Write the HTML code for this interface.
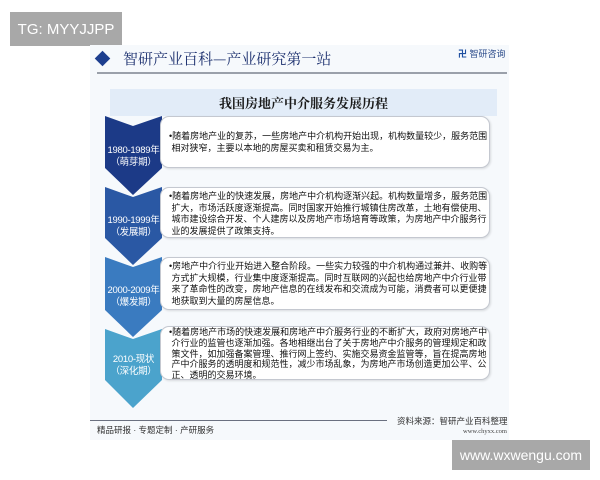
<!DOCTYPE html>
<html><head><meta charset="utf-8"><style>
*{margin:0;padding:0;box-sizing:border-box}
body{width:600px;height:480px;background:#fff;position:relative;overflow:hidden;font-family:"Liberation Sans","Noto Sans CJK SC",sans-serif}
.abs{position:absolute}
#panel{left:90px;top:45px;width:419px;height:395px;background:#f6f9fc}
.tag{background:#a8a8a8;color:#fff;font-size:15px;display:flex;align-items:center;justify-content:center}
.box{position:absolute;left:160px;width:330px;border:1px solid #c4c8d0;border-radius:9px;background:#fff;box-shadow:1px 1px 2px rgba(0,0,0,.12);padding:4px 0 0 8px;font-size:9px;line-height:12.4px;color:#111;white-space:nowrap;overflow:hidden}
.yr{position:absolute;left:103px;width:61px;text-align:center;color:#fff;font-size:9.5px;line-height:11.5px;white-space:nowrap;letter-spacing:-0.3px}
</style></head><body>
<div class="abs tag" style="left:10px;top:12px;width:112px;height:34px">TG: MYYJJPP</div>
<div id="panel" class="abs"></div>
<div class="abs" style="left:97px;top:53px;width:11px;height:11px;background:#1d3f8f;transform:rotate(45deg)"></div>
<div class="abs" style="left:123px;top:48px;font-family:'Noto Serif CJK SC',serif;font-size:15px;color:#1b2f6e;line-height:22px">智研产业百科—产业研究第一站</div>
<div class="abs" style="left:458px;top:48px;font-size:9px;color:#2a4a8a;line-height:12px"><span style="color:#1e4fa0;font-weight:bold">卍</span> 智研咨询</div>
<div class="abs" style="left:97px;top:72px;width:410px;height:2px;background:#9aa0aa"></div>
<div class="abs" style="left:110px;top:89px;width:387px;height:27px;background:#e2ecf8;text-align:center;font-family:'Noto Serif CJK SC',serif;font-weight:bold;font-size:13px;line-height:27px;color:#1a1a1a">我国房地产中介服务发展历程</div>

<svg class="abs" style="left:0;top:0" width="600" height="480">
<polygon points="105,116 133,126 162,116 162,168 133,195 105,168" fill="#1c3a87"/>
<polygon points="105,187 133,197 162,187 162,238 133,265 105,238" fill="#2a58a4"/>
<polygon points="105,257 133,267 162,257 162,310 133,337 105,310" fill="#3a7bc0"/>
<polygon points="105,329 133,339 162,329 162,380 133,408 105,380" fill="#4ba3cc"/>
</svg>

<div class="box" style="top:116px;height:52px;padding-top:13px">•随着房地产业的复苏，一些房地产中介机构开始出现，机构数量较少，服务范围<br>&nbsp;相对狭窄，主要以本地的房屋买卖和租赁交易为主。</div>
<div class="box" style="top:187px;height:51px;line-height:11.5px;padding-top:3px">•随着房地产业的快速发展，房地产中介机构逐渐兴起。机构数量增多，服务范围<br>&nbsp;扩大，市场活跃度逐渐提高。同时国家开始推行城镇住房改革，土地有偿使用、<br>&nbsp;城市建设综合开发、个人建房以及房地产市场培育等政策，为房地产中介服务行<br>&nbsp;业的发展提供了政策支持。</div>
<div class="box" style="top:257px;height:53px;line-height:11.5px;padding-top:3px">•房地产中介行业开始进入整合阶段。一些实力较强的中介机构通过兼并、收购等<br>&nbsp;方式扩大规模，行业集中度逐渐提高。同时互联网的兴起也给房地产中介行业带<br>&nbsp;来了革命性的改变，房地产信息的在线发布和交流成为可能，消费者可以更便捷<br>&nbsp;地获取到大量的房屋信息。</div>
<div class="box" style="top:326px;height:54px;line-height:10.8px;padding-top:0">•随着房地产市场的快速发展和房地产中介服务行业的不断扩大，政府对房地产中<br>&nbsp;介行业的监管也逐渐加强。各地相继出台了关于房地产中介服务的管理规定和政<br>&nbsp;策文件，如加强备案管理、推行网上签约、实施交易资金监管等，旨在提高房地<br>&nbsp;产中介服务的透明度和规范性，减少市场乱象，为房地产市场创造更加公平、公<br>&nbsp;正、透明的交易环境。</div>

<div class="yr" style="top:145px">1980-1989年<br>（萌芽期）</div>
<div class="yr" style="top:215px">1990-1999年<br>（发展期）</div>
<div class="yr" style="top:285px">2000-2009年<br>（爆发期）</div>
<div class="yr" style="top:354px">2010-现状<br>（深化期）</div>

<div class="abs" style="left:90px;top:420px;width:297px;height:1px;background:#6a7080"></div>
<div class="abs" style="left:97px;top:424px;font-size:8.5px;color:#333;line-height:12px">精品研报 · 专题定制 · 产研服务</div>
<div class="abs" style="left:397px;top:415px;font-size:8.5px;color:#333;line-height:12px">资料来源：智研产业百科整理</div>
<div class="abs" style="left:440px;top:427px;width:67px;text-align:right;font-family:'Liberation Serif',serif;font-size:6.5px;color:#444;line-height:10px">www.chyxx.com</div>
<div class="abs tag" style="left:452px;top:440px;width:138px;height:30px;font-size:14px">www.wxwengu.com</div>
</body></html>
